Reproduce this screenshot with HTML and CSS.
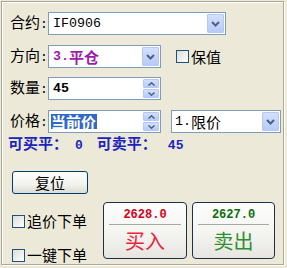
FILE: index.html
```html
<!DOCTYPE html>
<html>
<head>
<meta charset="utf-8">
<link rel="stylesheet" href="styles.css">
</head>
<body>
<div class="win">
  <div class="row r1">
    <span class="lbl">合约<span class="colon">:</span></span>
    <div class="combo w-contract">
      <span class="val"><span class="mono">IF0906</span></span>
      <span class="dd"><svg width="9" height="6" viewBox="0 0 9 6"><polyline points="1,1 4.5,4.5 8,1" fill="none" stroke="#4d6185" stroke-width="2"/></svg></span>
    </div>
  </div>
  <div class="row r2">
    <span class="lbl">方向<span class="colon">:</span></span>
    <div class="combo w-short">
      <span class="val dir"><span class="mono">3.</span>平仓</span>
      <span class="dd"><svg width="9" height="6" viewBox="0 0 9 6"><polyline points="1,1 4.5,4.5 8,1" fill="none" stroke="#4d6185" stroke-width="2"/></svg></span>
    </div>
    <label class="chk hedge"><span class="box"></span>保值</label>
  </div>
  <div class="row r3">
    <span class="lbl">数量<span class="colon">:</span></span>
    <div class="spin w-short">
      <span class="val qty"><span class="mono">45</span></span>
      <span class="arrows">
        <span class="sb"><svg width="7" height="4" viewBox="0 0 7 4"><polyline points="0.5,3.5 3.5,0.8 6.5,3.5" fill="none" stroke="#4d6185" stroke-width="1.5"/></svg></span>
        <span class="sb"><svg width="7" height="4" viewBox="0 0 7 4"><polyline points="0.5,0.5 3.5,3.2 6.5,0.5" fill="none" stroke="#4d6185" stroke-width="1.5"/></svg></span>
      </span>
    </div>
  </div>
  <div class="row r4">
    <span class="lbl">价格<span class="colon">:</span></span>
    <div class="spin w-short">
      <span class="val"><span class="sel">当前价</span></span>
      <span class="arrows">
        <span class="sb"><svg width="7" height="4" viewBox="0 0 7 4"><polyline points="0.5,3.5 3.5,0.8 6.5,3.5" fill="none" stroke="#4d6185" stroke-width="1.5"/></svg></span>
        <span class="sb"><svg width="7" height="4" viewBox="0 0 7 4"><polyline points="0.5,0.5 3.5,3.2 6.5,0.5" fill="none" stroke="#4d6185" stroke-width="1.5"/></svg></span>
      </span>
    </div>
    <div class="combo w-type">
      <span class="val type"><span class="mono">1.</span>限价</span>
      <span class="dd"><svg width="9" height="6" viewBox="0 0 9 6"><polyline points="1,1 4.5,4.5 8,1" fill="none" stroke="#4d6185" stroke-width="2"/></svg></span>
    </div>
  </div>
  <div class="avail">可买平：<span class="num n1">0</span>可卖平：<span class="num n2">45</span></div>
  <button class="reset">复位</button>
  <div class="bottom">
    <div class="checks">
      <label class="chk c1"><span class="box"></span>追价下单</label>
      <label class="chk c2"><span class="box"></span>一键下单</label>
    </div>
    <div class="trade buy">
      <div class="price">2628.0</div>
      <div class="act">买入</div>
    </div>
    <div class="trade sell">
      <div class="price">2627.0</div>
      <div class="act">卖出</div>
    </div>
  </div>
</div>
</body>
</html>
```

FILE: styles.css
```css
html, body {
  margin: 0;
  padding: 0;
  background: #ece9d8;
}
body {
  width: 287px;
  height: 268px;
  overflow: hidden;
  font-family: "Noto Sans CJK SC", sans-serif;
  color: #000;
}
.win {
  box-sizing: border-box;
  margin: 1px 0 0 1px;
  width: 283px;
  height: 264px;
  border: 1px solid #aca899;
  box-shadow: 1px 1px 0 #fff, inset 1px 1px 0 #fff;
  padding: 10px 0 0 8px;
}
.mono {
  font-family: "Liberation Mono", monospace;
  font-size: 13.3px;
}
.row {
  display: flex;
  align-items: center;
  height: 23px;
}
.r2 { margin-top: 10px; }
.r3 { margin-top: 9px; }
.r4 { margin-top: 10px; }
.lbl {
  flex: 0 0 38px;
  width: 38px;
  font-size: 15px;
  line-height: 18px;
  white-space: nowrap;
}
.colon {
  font-family: "Liberation Mono", monospace;
  font-size: 13px;
}
.combo, .spin {
  box-sizing: border-box;
  flex-shrink: 0;
  height: 23px;
  border: 1px solid #7f9db9;
  background: #fff;
  display: flex;
  align-items: stretch;
  padding: 1px;
}
.w-contract { width: 178px; }
.w-short { width: 113px; }
.w-type { width: 110px; margin-left: 10px; }
.val {
  flex: 1;
  display: flex;
  align-items: center;
  padding-left: 3px;
  font-size: 15px;
  line-height: 18px;
  white-space: nowrap;
  overflow: hidden;
}
.dir {
  color: #a01ca8;
  font-weight: bold;
}
.qty { font-weight: bold; }
.qty .mono { font-weight: bold; }
.dir .mono { font-weight: bold; }
.type { padding-left: 2px; }
.sel {
  background: #316ac5;
  color: #fff;
  font-weight: bold;
  font-size: 15px;
  line-height: 15px;
  padding: 0 1px 0 0;
  margin-left: -2px;
}
.dd {
  box-sizing: border-box;
  width: 17px;
  border: 1px solid #b5c7f3;
  border-radius: 1px;
  background: linear-gradient(#d3e0fd, #b7cbf8);
  display: flex;
  align-items: center;
  justify-content: center;
}
.arrows {
  width: 16px;
  display: flex;
  flex-direction: column;
  gap: 1px;
}
.sb {
  flex: 1;
  box-sizing: border-box;
  border: 1px solid #b5c7f3;
  border-radius: 1px;
  background: linear-gradient(#d3e0fd, #b7cbf8);
  display: flex;
  align-items: center;
  justify-content: center;
}
.chk {
  display: flex;
  align-items: center;
  font-size: 15px;
  line-height: 18px;
  white-space: nowrap;
}
.box {
  box-sizing: border-box;
  flex-shrink: 0;
  width: 13px;
  height: 13px;
  border: 1px solid #1c5180;
  background: linear-gradient(135deg, #dcdcd6, #fff);
  margin-right: 2px;
}
.hedge { margin-left: 15px; }
.avail {
  margin-top: 2px;
  margin-left: -2px;
  height: 16px;
  line-height: 16px;
  font-size: 15px;
  font-weight: bold;
  color: #1c24c0;
  white-space: nowrap;
}
.num {
  font-family: "Liberation Mono", monospace;
  font-size: 13px;
  font-weight: bold;
}
.n1 { margin-left: 7px; margin-right: 14px; }
.n2 { margin-left: 11px; }
.reset {
  display: block;
  box-sizing: border-box;
  margin: 20px 0 0 2px;
  width: 76px;
  height: 23px;
  padding: 0;
  border: 1px solid #003c74;
  border-radius: 3px;
  background: linear-gradient(#fefefe, #f2f2ee 60%, #dcdcd4);
  font-family: "Noto Sans CJK SC", sans-serif;
  font-size: 15px;
  line-height: 18px;
  color: #000;
}
.bottom {
  display: flex;
  margin-top: 8px;
}
.checks {
  width: 93px;
  display: flex;
  flex-direction: column;
  padding-left: 2px;
  box-sizing: border-box;
}
.chk.c1 { margin-top: 9px; height: 20px; }
.chk.c2 { margin-top: 14px; height: 20px; }
.trade {
  box-sizing: border-box;
  height: 57px;
  border: 1px solid #1e2f4c;
  border-radius: 4px;
  background: linear-gradient(#fdfdfd, #f4f4f1 55%, #e6e5e0);
  display: flex;
  flex-direction: column;
  align-items: center;
}
.buy { width: 84px; }
.sell { width: 83px; margin-left: 5px; }
.price {
  box-sizing: border-box;
  width: calc(100% - 10px);
  margin-top: 5px;
  height: 17px;
  line-height: 15px;
  text-align: center;
  font-family: "Liberation Mono", monospace;
  font-size: 12px;
  font-weight: bold;
  border-bottom: 1px solid #a8a8a0;
}
.act {
  margin-top: 3px;
  font-size: 20px;
  line-height: 26px;
}
.buy .price { color: #d4001c; }
.buy .act { color: #e8253c; }
.sell .price { color: #0a6e0a; }
.sell .act { color: #2f8f2f; }
```
